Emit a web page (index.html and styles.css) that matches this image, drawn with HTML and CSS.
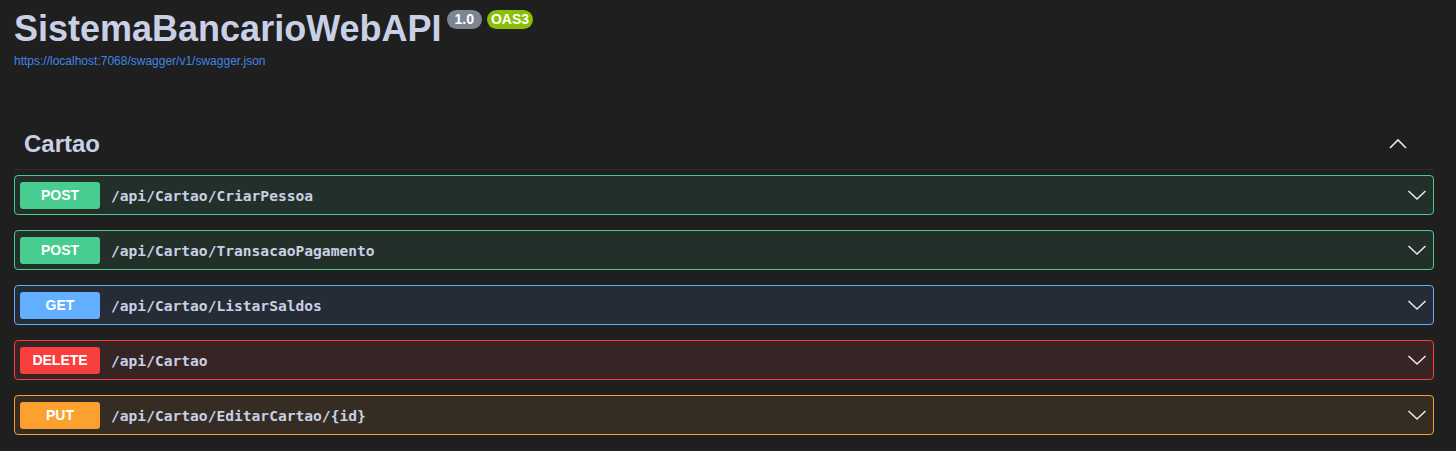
FILE: index.html
```html
<!DOCTYPE html>
<html lang="pt">
<head>
<meta charset="utf-8">
<title>SistemaBancarioWebAPI</title>
<link rel="stylesheet" href="styles.css">
</head>
<body>
<div class="page">
  <header class="info">
    <div class="title-row">
      <h2 class="title">SistemaBancarioWebAPI</h2>
      <span class="badge badge-version">1.0</span>
      <span class="badge badge-oas">OAS3</span>
    </div>
    <a class="spec-link" href="#">https://localhost:7068/swagger/v1/swagger.json</a>
  </header>

  <section class="tag-section">
    <div class="tag-header">
      <h3 class="tag-name">Cartao</h3>
      <svg class="tag-arrow" width="20" height="20" viewBox="0 0 20 20"><polyline points="2,14 10,6 18,14" fill="none" stroke="#e8e8e8" stroke-width="1.6"/></svg>
    </div>

    <div class="op op-post">
      <span class="method">POST</span>
      <span class="path">/api/Cartao/CriarPessoa</span>
      <svg class="op-arrow" width="20" height="20" viewBox="0 0 20 20"><polyline points="1.5,6 10,14 18.5,6" fill="none" stroke="#e8e8e8" stroke-width="1.6"/></svg>
    </div>
    <div class="op op-post">
      <span class="method">POST</span>
      <span class="path">/api/Cartao/TransacaoPagamento</span>
      <svg class="op-arrow" width="20" height="20" viewBox="0 0 20 20"><polyline points="1.5,6 10,14 18.5,6" fill="none" stroke="#e8e8e8" stroke-width="1.6"/></svg>
    </div>
    <div class="op op-get">
      <span class="method">GET</span>
      <span class="path">/api/Cartao/ListarSaldos</span>
      <svg class="op-arrow" width="20" height="20" viewBox="0 0 20 20"><polyline points="1.5,6 10,14 18.5,6" fill="none" stroke="#e8e8e8" stroke-width="1.6"/></svg>
    </div>
    <div class="op op-delete">
      <span class="method">DELETE</span>
      <span class="path">/api/Cartao</span>
      <svg class="op-arrow" width="20" height="20" viewBox="0 0 20 20"><polyline points="1.5,6 10,14 18.5,6" fill="none" stroke="#e8e8e8" stroke-width="1.6"/></svg>
    </div>
    <div class="op op-put">
      <span class="method">PUT</span>
      <span class="path">/api/Cartao/EditarCartao/{id}</span>
      <svg class="op-arrow" width="20" height="20" viewBox="0 0 20 20"><polyline points="1.5,6 10,14 18.5,6" fill="none" stroke="#e8e8e8" stroke-width="1.6"/></svg>
    </div>
  </section>
</div>
</body>
</html>
```

FILE: styles.css
```css
html, body {
  margin: 0;
  padding: 0;
  background: #1f1f1f;
}

body {
  font-family: "Liberation Sans", Arial, sans-serif;
  color: #c9d0e6;
}

.page {
  padding: 8px 22px 0 14px;
}

.info {
  display: flex;
  flex-direction: column;
  align-items: flex-start;
}

.title-row {
  display: flex;
  align-items: flex-start;
}

.title {
  margin: 0;
  font-size: 36px;
  line-height: 42px;
  font-weight: 700;
  color: #c9d0e6;
}

.badge {
  display: inline-block;
  margin-top: 2px;
  height: 19px;
  line-height: 19px;
  border-radius: 10px;
  font-size: 14px;
  font-weight: 700;
  color: #ffffff;
}

.badge-version {
  margin-left: 6px;
  background: #7d8492;
  padding: 0 8px 0 7px;
}

.badge-oas {
  margin-left: 5px;
  background: #89bf04;
  padding: 0 4px;
}

.spec-link {
  margin-top: 4px;
  font-size: 12px;
  line-height: 14px;
  color: #3f86e0;
  text-decoration: none;
}

.tag-section {
  margin-top: 62px;
}

.tag-header {
  display: flex;
  align-items: center;
  justify-content: space-between;
  padding: 0 26px 11px 10px;
  border-bottom: 1px solid #2e2e2e;
  margin-bottom: 5px;
}

.tag-name {
  margin: 0;
  font-size: 24px;
  line-height: 28px;
  font-weight: 700;
  color: #c9d0e6;
}

.tag-arrow {
  display: block;
}

.op {
  display: flex;
  align-items: center;
  height: 38px;
  padding: 0 6px 0 5px;
  margin-bottom: 15px;
  border: 1px solid;
  border-radius: 4px;
}

.method {
  flex: none;
  width: 80px;
  height: 27px;
  line-height: 27px;
  border-radius: 3px;
  text-align: center;
  font-size: 14px;
  font-weight: 700;
  color: #ffffff;
}

.path {
  flex: 1;
  padding-left: 11px;
  font-family: "DejaVu Sans Mono", "Liberation Mono", monospace;
  font-weight: 700;
  font-size: 14.6px;
  color: #c9d0e6;
}

.op-arrow {
  flex: none;
  display: block;
}

.op-post { border-color: #49cc90; background: #233029; }
.op-post .method { background: #49cc90; }

.op-get { border-color: #61affe; background: #252c35; }
.op-get .method { background: #61affe; }

.op-delete { border-color: #f93e3e; background: #372526; }
.op-delete .method { background: #f93e3e; }

.op-put { border-color: #fca130; background: #352d24; }
.op-put .method { background: #fca130; }
```
